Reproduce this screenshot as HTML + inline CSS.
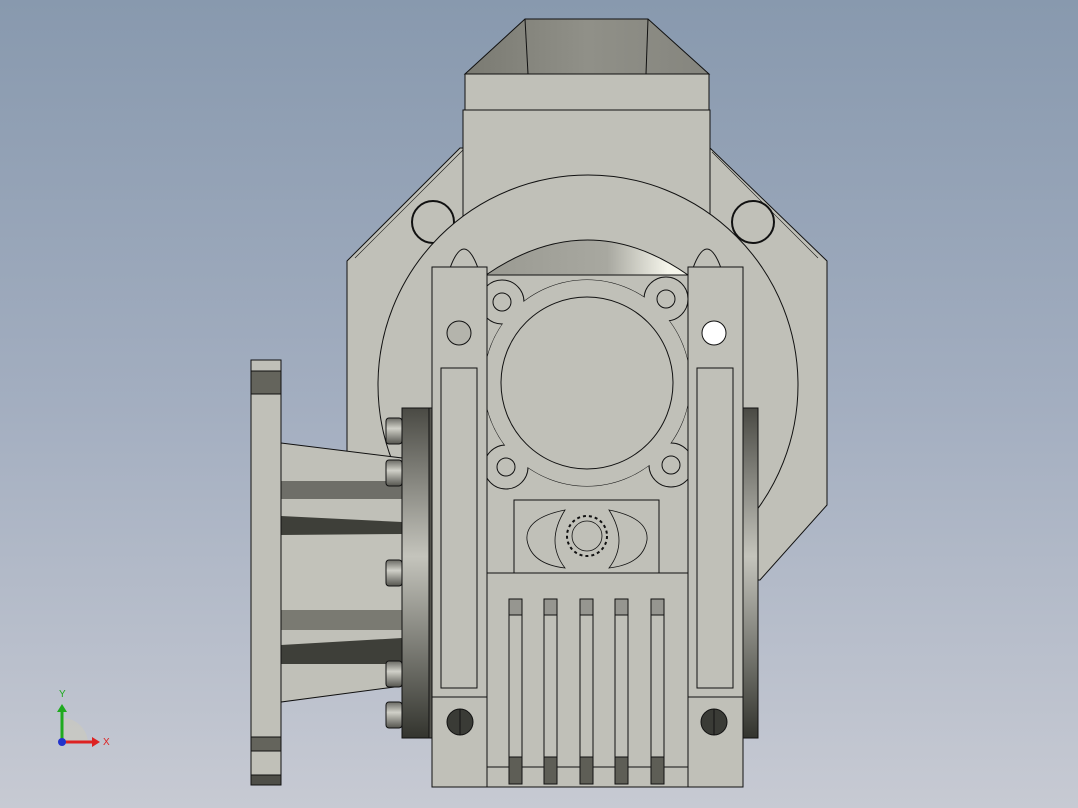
<!DOCTYPE html>
<html><head><style>
html,body{margin:0;padding:0;width:1078px;height:808px;overflow:hidden}
body{background:linear-gradient(#8899ae 0%,#a3aec0 50%,#c7cad3 100%)}
svg{position:absolute;left:0;top:0}
</style></head><body>
<svg width="1078" height="808" viewBox="0 0 1078 808" xmlns="http://www.w3.org/2000/svg">
<defs>
<linearGradient id="disc" x1="0" y1="0" x2="0" y2="1">
<stop offset="0" stop-color="#4a4a44"/><stop offset="0.45" stop-color="#c4c4bc"/><stop offset="1" stop-color="#33342e"/></linearGradient>
<linearGradient id="bolt" x1="0" y1="0" x2="0" y2="1">
<stop offset="0" stop-color="#6a6a64"/><stop offset="0.4" stop-color="#d0d0c8"/><stop offset="1" stop-color="#55554f"/></linearGradient>
<linearGradient id="arcg" x1="0" y1="0" x2="1" y2="0">
<stop offset="0" stop-color="#9a9a92"/><stop offset="0.6" stop-color="#a8a8a0"/><stop offset="0.9" stop-color="#f4f4ea"/></linearGradient>
<linearGradient id="hop" x1="0" y1="0" x2="1" y2="0">
<stop offset="0" stop-color="#7a7a72"/><stop offset="0.5" stop-color="#909088"/><stop offset="1" stop-color="#85857e"/></linearGradient>
<clipPath id="mid"><rect x="487" y="260" width="201" height="320"/></clipPath>
</defs>
<g stroke="#111" stroke-width="1" fill="#c0c0b8">
<!-- motor octagon -->
<path d="M347,261 L460,148 L710,148 L827,261 L827,505 L760,580 L400,580 L347,505 Z"/>
<line x1="355" y1="258" x2="463" y2="150" stroke-width="0.6"/>
<line x1="818" y1="258" x2="712" y2="152" stroke-width="0.6"/>
<!-- terminal box -->
<rect x="463" y="110" width="247" height="115"/>
<rect x="465" y="74" width="244" height="36"/>
<path d="M465,74 L525,19 L648,19 L709,74 Z" fill="url(#hop)"/>
<line x1="525" y1="19" x2="528" y2="74"/><line x1="648" y1="19" x2="646" y2="74"/>
<!-- lifting rings -->
<circle cx="433" cy="222" r="21" fill="none" stroke-width="2"/>
<circle cx="753" cy="222" r="21" fill="none" stroke-width="2"/>
<!-- big circle -->
<circle cx="588" cy="385" r="210"/>
<!-- top gradient arc -->
<path d="M486,275 Q588,205 688,275 Z" fill="url(#arcg)"/>
<!-- bolt heads top -->
<path d="M450,268 q14,-38 28,0 Z"/><path d="M693,268 q14,-38 28,0 Z"/>
<!-- gearbox central body -->
<rect x="487" y="275" width="201" height="512"/>
<!-- flange boss -->
<g clip-path="url(#mid)">
<circle cx="587" cy="383" r="103"/>
<circle cx="502" cy="302" r="22"/><circle cx="666" cy="299" r="22"/>
<circle cx="506" cy="467" r="22"/><circle cx="671" cy="465" r="22"/>
<circle cx="587" cy="383" r="103" stroke="none"/>
<circle cx="502" cy="302" r="21" stroke="none"/><circle cx="666" cy="299" r="21" stroke="none"/>
<circle cx="506" cy="467" r="21" stroke="none"/><circle cx="671" cy="465" r="21" stroke="none"/>
</g>
<circle cx="587" cy="383" r="86"/>
<circle cx="502" cy="302" r="9"/><circle cx="666" cy="299" r="9"/>
<circle cx="506" cy="467" r="9"/><circle cx="671" cy="465" r="9"/>
<!-- columns -->
<rect x="432" y="267" width="55" height="520"/>
<rect x="688" y="267" width="55" height="520"/>
<line x1="432" y1="697" x2="487" y2="697"/><line x1="688" y1="697" x2="743" y2="697"/>
<rect x="441" y="368" width="36" height="320"/>
<rect x="697" y="368" width="36" height="320"/>
<circle cx="459" cy="333" r="12" fill="#b4b4ac"/>
<circle cx="714" cy="333" r="12" fill="#fff"/>
<circle cx="460" cy="722" r="13" fill="#3a3b36"/><line x1="460" y1="709" x2="460" y2="735"/>
<circle cx="714" cy="722" r="13" fill="#3a3b36"/><line x1="714" y1="709" x2="714" y2="735"/>
<!-- nameplate -->
<rect x="514" y="500" width="145" height="73"/>
<path d="M565,510 q-40,8 -38,30 q4,24 38,28 q-20,-26 0,-58 Z" fill="none" stroke-width="0.8"/>
<path d="M609,510 q40,8 38,30 q-4,24 -38,28 q20,-26 0,-58 Z" fill="none" stroke-width="0.8"/>
<circle cx="587" cy="536" r="20" fill="none" stroke-dasharray="3 3" stroke-width="2"/>
<circle cx="587" cy="536" r="15" fill="none" stroke-width="0.8"/>
<!-- ribs area -->
<rect x="487" y="573" width="201" height="194"/>
<g>
<rect x="509" y="599" width="13" height="185"/><rect x="544" y="599" width="13" height="185"/>
<rect x="580" y="599" width="13" height="185"/><rect x="615" y="599" width="13" height="185"/>
<rect x="651" y="599" width="13" height="185"/>
</g>
<g fill="#969690">
<rect x="509" y="599" width="13" height="16"/><rect x="544" y="599" width="13" height="16"/>
<rect x="580" y="599" width="13" height="16"/><rect x="615" y="599" width="13" height="16"/>
<rect x="651" y="599" width="13" height="16"/></g>
<g fill="#5e5e56">
<rect x="509" y="757" width="13" height="27"/><rect x="544" y="757" width="13" height="27"/>
<rect x="580" y="757" width="13" height="27"/><rect x="615" y="757" width="13" height="27"/>
<rect x="651" y="757" width="13" height="27"/></g>
<!-- right disc -->
<rect x="743" y="408" width="15" height="330" fill="url(#disc)"/>
<!-- left housing -->
<path d="M281,443 L402,458 L402,686 L281,702 Z"/>
<rect x="281" y="481" width="121" height="18" fill="#6e6e68" stroke="none"/>
<path d="M281,516 L402,522 L402,534 L281,535 Z" fill="#3e3f39" stroke="none"/>
<rect x="281" y="535" width="121" height="75" fill="#c2c2ba" stroke="none"/>
<rect x="281" y="610" width="121" height="20" fill="#7a7a72" stroke="none"/>
<path d="M281,645 L402,638 L402,664 L281,664 Z" fill="#3e3f39" stroke="none"/>
<!-- plate -->
<rect x="251" y="360" width="30" height="425"/>
<rect x="251" y="371" width="30" height="23" fill="#64645c"/>
<rect x="251" y="737" width="30" height="14" fill="#64645c"/>
<rect x="251" y="775" width="30" height="10" fill="#4e4e48"/>
<!-- bolts -->
<rect x="386" y="418" width="16" height="26" rx="3" fill="url(#bolt)"/>
<rect x="386" y="460" width="16" height="26" rx="3" fill="url(#bolt)"/>
<rect x="386" y="560" width="16" height="26" rx="3" fill="url(#bolt)"/>
<rect x="386" y="661" width="16" height="26" rx="3" fill="url(#bolt)"/>
<rect x="386" y="702" width="16" height="26" rx="3" fill="url(#bolt)"/>
<!-- left disc -->
<rect x="402" y="408" width="27" height="330" fill="url(#disc)"/>
<rect x="429" y="408" width="3" height="330" fill="#55554f"/>
</g>
<!-- axis triad -->
<path d="M62,742 L62,718 A26,26 0 0 1 88,742 Z" fill="#c8c8c0" opacity="0.8"/>
<line x1="62" y1="742" x2="62" y2="708" stroke="#1faa1f" stroke-width="3"/>
<polygon points="57,712 67,712 62,704" fill="#1faa1f"/>
<line x1="62" y1="742" x2="94" y2="742" stroke="#dd2222" stroke-width="3"/>
<polygon points="92,737 92,747 100,742" fill="#dd2222"/>
<circle cx="62" cy="742" r="4" fill="#2233cc"/>
<text x="59" y="697" font-family="Liberation Sans,sans-serif" font-size="10" fill="#1faa1f">Y</text>
<text x="103" y="745" font-family="Liberation Sans,sans-serif" font-size="10" fill="#dd2222">X</text>
</svg>
</body></html>
